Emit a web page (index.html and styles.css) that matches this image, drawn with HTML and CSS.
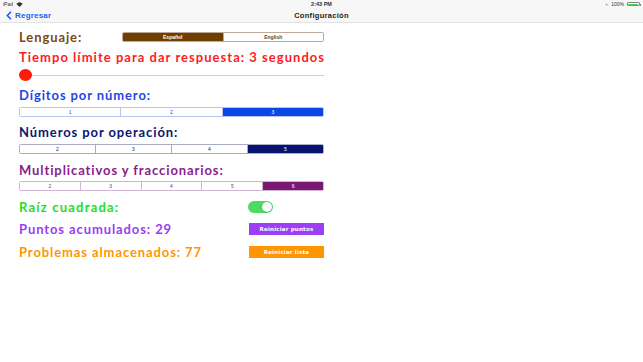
FILE: index.html
```html
<!DOCTYPE html>
<html lang="es">
<head>
  <meta charset="UTF-8" />
  <meta name="viewport" content="width=device-width, initial-scale=1.0"/>
  <title>Configuración</title>
  <link rel="stylesheet" href="styles.css">
</head>
<body>
  <div class="status-bar">
    <div class="status-left">iPad
      <svg class="wifi" width="7" height="5" viewBox="0 0 14 10"><path d="M7 10 L0.5 3.5 A9.5 9.5 0 0 1 13.5 3.5 Z" fill="#333"/></svg>
    </div>
    <div class="status-time">2:43 PM</div>
    <div class="status-right">
      <span class="bt">&#x2733;</span>
      <span>100%</span>
      <span class="battery"><span class="battery-level"></span></span>
    </div>
  </div>

  <div class="nav-bar">
    <a class="back">
      <svg width="6" height="9" viewBox="0 0 6 9"><path d="M5 0.8 L1.3 4.5 L5 8.2" fill="none" stroke="#1a5cff" stroke-width="1.6"/></svg>
      Regresar
    </a>
    <div class="nav-title">Configuración</div>
  </div>

  <div class="settings">
    <div class="row lang-row">
      <div class="label brown">Lenguaje:</div>
      <div class="segmented seg-brown lang-seg">
        <span class="active">Español</span>
        <span>English</span>
      </div>
    </div>

    <div class="label red title-time">Tiempo límite para dar respuesta: 3 segundos</div>
    <div class="slider">
      <div class="slider-track"></div>
      <div class="slider-thumb"></div>
    </div>

    <div class="label blue title-digits">Dígitos por número:</div>
    <div class="segmented seg-blue">
      <span>1</span>
      <span>2</span>
      <span class="active">3</span>
    </div>

    <div class="label navy title-gap">Números por operación:</div>
    <div class="segmented seg-navy">
      <span>2</span>
      <span>3</span>
      <span>4</span>
      <span class="active">5</span>
    </div>

    <div class="label purple title-gap multi">Multiplicativos y fraccionarios:</div>
    <div class="segmented seg-purple seg-tight">
      <span>2</span>
      <span>3</span>
      <span>4</span>
      <span>5</span>
      <span class="active">6</span>
    </div>

    <div class="row root-row">
      <div class="label green root-label">Raíz cuadrada:</div>
      <div class="toggle"><div class="toggle-knob"></div></div>
    </div>

    <div class="row points-row">
      <div class="label violet">Puntos acumulados: 29</div>
      <button class="action-btn btn-violet">Reiniciar puntos</button>
    </div>

    <div class="row stored-row">
      <div class="label orange">Problemas almacenados: 77</div>
      <button class="action-btn btn-orange">Reiniciar lista</button>
    </div>
  </div>
</body>
</html>
```

FILE: styles.css
```css
* {
  box-sizing: border-box;
}

body {
  margin: 0;
  background: #fff;
  font-family: 'Lato', sans-serif;
  width: 643px;
  height: 362px;
  overflow: hidden;
}

/* status bar */
.status-bar {
  height: 8px;
  background: #f7f7f7;
  display: flex;
  align-items: center;
  justify-content: space-between;
  padding: 0 3px 0 3px;
  font-family: 'Liberation Sans', sans-serif;
  font-size: 5px;
  color: #333;
  position: relative;
}

.status-left {
  display: flex;
  align-items: center;
  gap: 3px;
  width: 100px;
}

.status-time {
  font-weight: bold;
  font-size: 5.5px;
}

.status-right {
  display: flex;
  align-items: center;
  justify-content: flex-end;
  gap: 3px;
  width: 100px;
}

.bt {
  font-size: 4px;
  color: #777;
}

.battery {
  width: 13px;
  height: 4px;
  border: 0.5px solid #888;
  border-radius: 1px;
  padding: 0.5px;
  position: relative;
}

.battery::after {
  content: '';
  position: absolute;
  right: -2px;
  top: 1px;
  width: 1px;
  height: 1.5px;
  background: #888;
}

.battery-level {
  display: block;
  width: 100%;
  height: 100%;
  background: #4cd964;
}

/* nav bar */
.nav-bar {
  height: 15px;
  background: #f7f7f7;
  border-bottom: 1px solid #e2e2e2;
  display: flex;
  align-items: center;
  position: relative;
  padding-left: 6px;
}

.back {
  display: flex;
  align-items: center;
  gap: 3px;
  color: #1a5cff;
  font-family: 'Liberation Sans', sans-serif;
  font-size: 8px;
  font-weight: bold;
  letter-spacing: 0.2px;
}

.nav-title {
  position: absolute;
  left: 0;
  right: 0;
  text-align: center;
  font-family: 'Liberation Sans', sans-serif;
  font-size: 7.5px;
  font-weight: bold;
  color: #222;
  letter-spacing: 0.3px;
  pointer-events: none;
}

/* settings */
.settings {
  width: 324px;
  padding-left: 19px;
  display: flex;
  flex-direction: column;
}

.row {
  display: flex;
  align-items: center;
  justify-content: space-between;
}

.label {
  font-size: 13px;
  font-weight: bold;
  line-height: 16px;
  height: 16px;
  white-space: nowrap;
  letter-spacing: 0.9px;
}

.lang-row {
  margin-top: 6px;
}

.title-time {
  margin-top: 4px;
  letter-spacing: 1.03px;
}

.title-digits {
  margin-top: 6px;
}

.title-gap {
  margin-top: 7px;
}

.multi {
  margin-top: 8px;
}

.root-label {
  letter-spacing: 1.2px;
}

.brown { color: #7b4a12; }
.red { color: #ff1c1c; }
.blue { color: #1f45e8; }
.navy { color: #0c1670; }
.purple { color: #8a1d8a; }
.green { color: #22e022; }
.violet { color: #9a3cf5; }
.orange { color: #ff9500; }

/* slider */
.slider {
  margin-top: 4px;
  height: 12px;
  position: relative;
  display: flex;
  align-items: center;
}

.slider-track {
  width: 100%;
  height: 1px;
  background: #cfcfcf;
}

.slider-thumb {
  position: absolute;
  left: 0;
  top: 0;
  width: 13px;
  height: 12px;
  border-radius: 50%;
  background: #ff1a0a;
}

/* segmented controls */
.segmented {
  display: flex;
  height: 10px;
  margin-top: 4px;
  border: 1px solid;
  border-radius: 1.5px;
  overflow: hidden;
  font-family: 'Liberation Sans', sans-serif;
  font-size: 5px;
}

.segmented span {
  flex: 1;
  display: flex;
  align-items: center;
  justify-content: center;
  border-left: 1px solid;
  border-color: inherit;
  background: #fff;
}

.segmented span:first-child {
  border-left: none;
}

.seg-tight {
  margin-top: 3px;
}

.lang-seg {
  width: 202px;
  margin-top: 0;
  font-weight: bold;
}

.seg-brown { border-color: #bda89a; color: #6e3f00; }
.seg-brown .active { background: #6e3f00; color: #fff; }

.seg-blue { border-color: #b8c5f2; color: #1f45e8; }
.seg-blue .active { background: #0b47e6; color: #fff; }

.seg-navy { border-color: #a9acc8; color: #0c1670; }
.seg-navy .active { background: #08136e; color: #fff; }

.seg-purple { border-color: #d1b3d3; color: #8a1d8a; }
.seg-purple .active { background: #781873; color: #fff; }

/* toggle + buttons */
.root-row {
  margin-top: 8px;
}

.points-row {
  margin-top: 6px;
}

.stored-row {
  margin-top: 7px;
}

.toggle {
  width: 25px;
  height: 12px;
  margin-right: 51px;
  border-radius: 6px;
  background: #4cd964;
  position: relative;
}

.toggle-knob {
  position: absolute;
  right: 1px;
  top: 1px;
  width: 10px;
  height: 10px;
  border-radius: 50%;
  background: #fff;
  box-shadow: 0 0.5px 1px rgba(0, 0, 0, 0.3);
}

.action-btn {
  width: 75px;
  height: 12px;
  padding: 0;
  border: none;
  color: #fff;
  font-family: 'DejaVu Sans', sans-serif;
  font-size: 5.5px;
  font-weight: bold;
  letter-spacing: 0.2px;
}

.btn-violet { background: #9b3ef5; }
.btn-orange { background: #ff9500; }
```
